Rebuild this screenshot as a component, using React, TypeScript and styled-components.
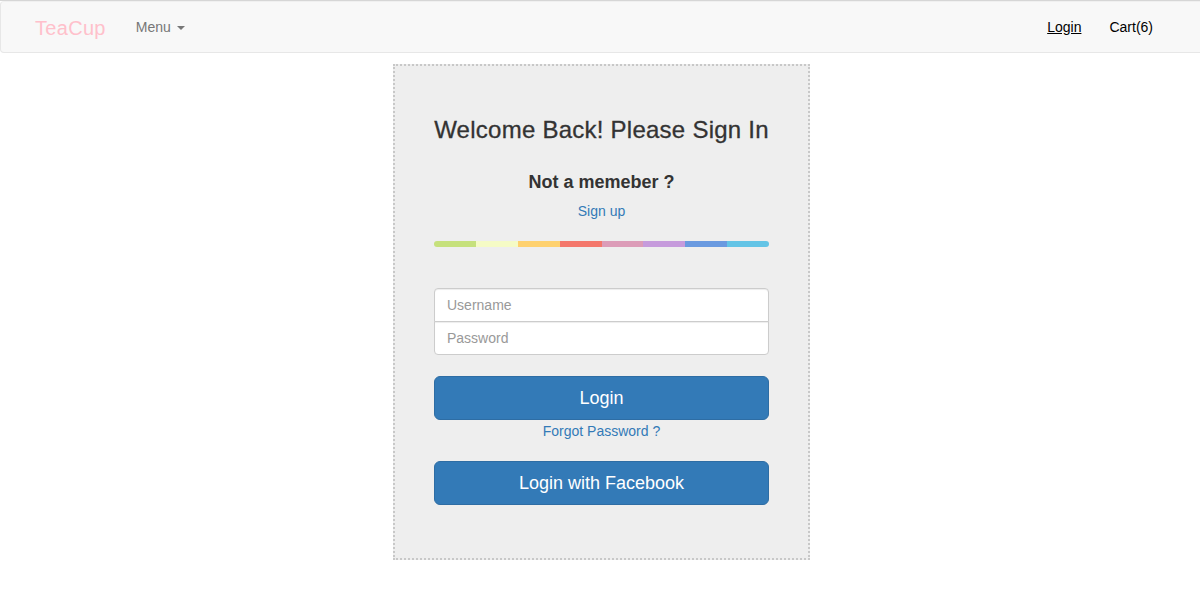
import React from "react";
import styled, { createGlobalStyle } from "styled-components";

const Global = createGlobalStyle`
  html, body { margin: 0; padding: 0; background: #fff; overflow-x: hidden; }
  body { font-family: "Liberation Sans", Arial, sans-serif; font-size: 14px; color: #333; line-height: 1.42857; border-top: 1px solid #d6d6d6; }
  * { box-sizing: border-box; }
`;

const Navbar = styled.nav`
  height: 52px;
  margin-right: -6px;
  background: #f8f8f8;
  border: 1px solid #e7e7e7;
  border-top-color: #f0f0f0;
  border-radius: 4px;
  display: flex;
  align-items: center;
  justify-content: space-between;
  padding: 2px 52px 0 34px;
`;

const NavGroup = styled.div<{ gap: number }>`
  display: flex;
  align-items: center;
  gap: ${(p) => p.gap}px;
`;

const Brand = styled.a`
  color: pink;
  font-size: 20px;
  letter-spacing: 0.3px;
  text-decoration: none;
  line-height: 20px;
`;

const NavLink = styled.a<{ underline?: boolean }>`
  font-size: 14px;
  color: #000;
  text-decoration: ${(p) => (p.underline ? "underline" : "none")};
  display: inline-flex;
  align-items: center;
  gap: 6px;
`;

const MenuLink = styled(NavLink)`
  color: #777;
`;

const Caret = styled.span`
  display: inline-block;
  width: 0;
  height: 0;
  border-top: 4px solid #777;
  border-left: 4px solid transparent;
  border-right: 4px solid transparent;
  margin-top: 1px;
`;

const Page = styled.main`
  display: flex;
  justify-content: center;
  padding: 11px 0 0 3px;
`;

const Card = styled.section`
  width: 417px;
  background: #eee;
  border: 2px dotted #c8c8c8;
  padding: 51px 39px 53px;
  display: flex;
  flex-direction: column;
  align-items: stretch;
  text-align: center;
`;

const Title = styled.h3`
  margin: 0;
  font-size: 24px;
  font-weight: 500;
  letter-spacing: 0.25px;
  line-height: 26px;
  color: #333;
  -webkit-text-stroke: 0.3px #333;
`;

const Subtitle = styled.h4`
  margin: 29px 0 0;
  font-size: 18px;
  font-weight: 600;
  line-height: 20px;
  color: #333;
`;

const Link = styled.a<{ mt: number }>`
  color: #337ab7;
  text-decoration: none;
  font-size: 14px;
  line-height: 20px;
  display: block;
  margin-top: ${(p) => p.mt}px;
`;

const Bar = styled.div`
  display: flex;
  height: 6px;
  border-radius: 3px;
  overflow: hidden;
  margin-top: 20px;
`;

const Segment = styled.div<{ c: string }>`
  flex: 1;
  background: ${(p) => p.c};
`;

const Form = styled.form`
  display: flex;
  flex-direction: column;
  margin-top: 41px;
`;

const Input = styled.input<{ pos: "top" | "bottom" }>`
  height: 34px;
  width: 100%;
  border: 1px solid #ccc;
  border-radius: ${(p) => (p.pos === "top" ? "4px 4px 0 0" : "0 0 4px 4px")};
  margin-top: ${(p) => (p.pos === "top" ? "0" : "-1px")};
  padding: 6px 12px;
  font-family: inherit;
  font-size: 14px;
  color: #555;
  background: #fff;
  box-shadow: inset 0 1px 1px rgba(0,0,0,0.075);
  &::placeholder { color: #999; }
`;

const Button = styled.button<{ mt: number }>`
  height: 44px;
  width: 100%;
  margin-top: ${(p) => p.mt}px;
  background: #337ab7;
  border: 1px solid #2e6da4;
  border-radius: 6px;
  color: #fff;
  font-family: inherit;
  font-size: 18px;
  line-height: 24px;
  cursor: pointer;
`;

const colors = ["#c6e17c", "#f5fbc6", "#fed16f", "#f4776b", "#dc9cb8", "#c69bdc", "#6a9ae0", "#63c4e6"];

export default function App() {
  return (
    <>
      <Global />
      <Navbar>
        <NavGroup gap={30}>
          <Brand href="#">TeaCup</Brand>
          <MenuLink href="#">Menu <Caret /></MenuLink>
        </NavGroup>
        <NavGroup gap={28}>
          <NavLink href="#" underline>Login</NavLink>
          <NavLink href="#">Cart(6)</NavLink>
        </NavGroup>
      </Navbar>
      <Page>
        <Card>
          <Title>Welcome Back! Please Sign In</Title>
          <Subtitle>Not a memeber ?</Subtitle>
          <Link href="#" mt={9}>Sign up</Link>
          <Bar>
            {colors.map((c) => (
              <Segment key={c} c={c} />
            ))}
          </Bar>
          <Form onSubmit={(e) => e.preventDefault()}>
            <Input pos="top" placeholder="Username" />
            <Input pos="bottom" type="password" placeholder="Password" />
            <Button type="submit" mt={21}>Login</Button>
            <Link href="#" mt={1}>Forgot Password ?</Link>
            <Button type="button" mt={20}>Login with Facebook</Button>
          </Form>
        </Card>
      </Page>
    </>
  );
}
